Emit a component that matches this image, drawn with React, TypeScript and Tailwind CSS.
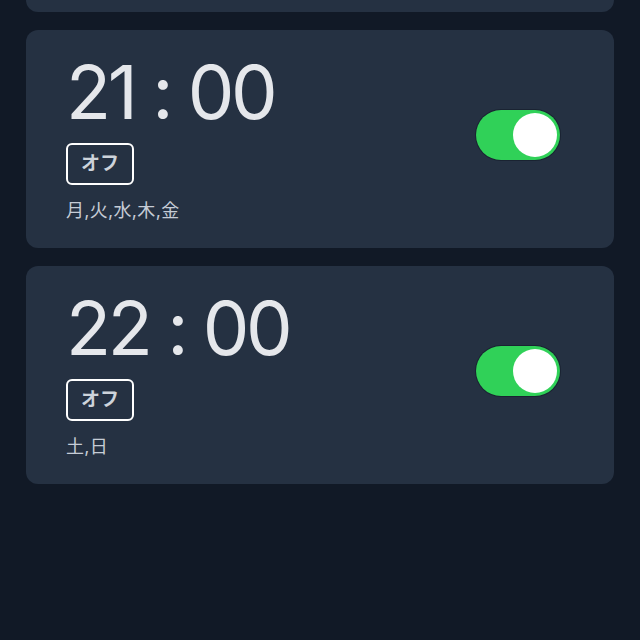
const alarms = [
  { time: '20 : 00', days: '月,火,水,木,金' },
  { time: '21 : 00', days: '月,火,水,木,金' },
  { time: '22 : 00', days: '土,日' },
];

function Toggle() {
  return (
    <div className="relative w-[84px] h-[50px] rounded-full bg-[#30d158] shadow-[0_0_0_1px_#1a2332]">
      <div className="absolute right-[3px] top-[3px] w-[44px] h-[44px] rounded-full bg-white" />
    </div>
  );
}

export default function App() {
  return (
    <div
      className="w-full h-[640px] overflow-hidden bg-[#111926]"
      style={{ fontFamily: 'Inter, "Noto Sans CJK JP", sans-serif' }}
    >
      <div className="flex flex-col gap-[18px] px-[26px] -mt-[206px]">
        {alarms.map((a) => (
          <div
            key={a.time}
            className="h-[218px] rounded-xl bg-[#253142] flex items-center justify-between pl-[40px] pr-[54px]"
          >
            <div className="flex flex-col -mt-[4px]">
              <div className="text-[74px] leading-none font-normal text-[#e5e7eb] tracking-[-3.3px]">
                {a.time}
              </div>
              <div className="mt-[14px] self-start border-2 border-white rounded-md px-[13px] py-[6px] text-[19px] leading-[26px] font-semibold text-[#cdd3da]">
                オフ
              </div>
              <div className="mt-[17px] text-[18px] leading-none tracking-[0.3px] text-[#c5ccd6]">{a.days}</div>
            </div>
            <div className="-mt-[8px]">
              <Toggle />
            </div>
          </div>
        ))}
      </div>
    </div>
  );
}
